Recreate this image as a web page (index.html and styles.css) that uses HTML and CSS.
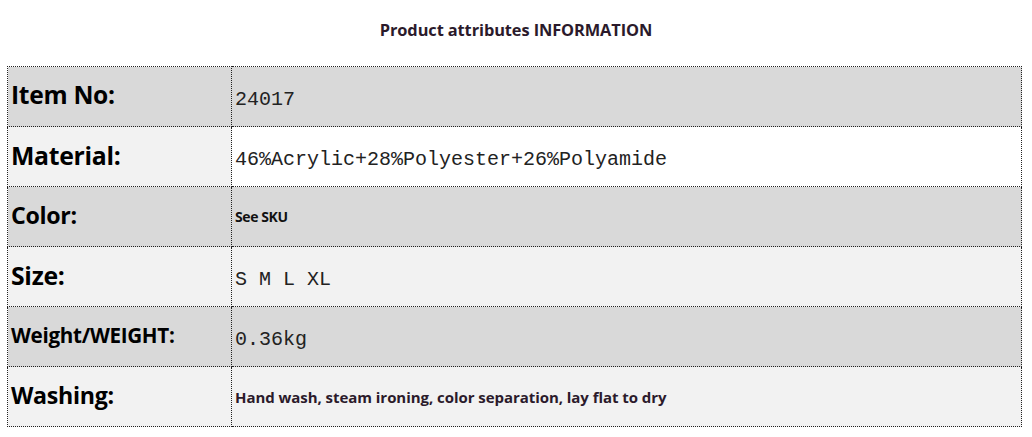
FILE: index.html
```html
<!DOCTYPE html>
<html>
<head>
<meta charset="utf-8">
<link rel="stylesheet" href="styles.css">
</head>
<body>
<div class="page">
  <h1 class="title">Product attributes INFORMATION</h1>
  <table class="attrs">
    <tr class="dark">
      <td class="label l-item">Item No:</td>
      <td class="value mono">24017</td>
    </tr>
    <tr class="light white-val">
      <td class="label l-material">Material:</td>
      <td class="value mono">46%Acrylic+28%Polyester+26%Polyamide</td>
    </tr>
    <tr class="dark">
      <td class="label l-color">Color:</td>
      <td class="value small">See SKU</td>
    </tr>
    <tr class="light">
      <td class="label l-size">Size:</td>
      <td class="value mono">S M L XL</td>
    </tr>
    <tr class="dark">
      <td class="label l-weight">Weight/WEIGHT:</td>
      <td class="value mono">0.36kg</td>
    </tr>
    <tr class="light">
      <td class="label l-washing">Washing:</td>
      <td class="value wash">Hand wash, steam ironing, color separation, lay flat to dry</td>
    </tr>
  </table>
</div>
</body>
</html>
```
FILE: styles.css
```css
html, body {
  margin: 0;
  padding: 0;
  background: #ffffff;
}
.page {
  width: 1032px;
  padding-top: 20px;
}
.title {
  margin: 0 0 26px 0;
  text-align: center;
  font-family: "Open Sans", sans-serif;
  font-weight: 700;
  font-size: 16.4px;
  line-height: 20px;
  color: #2b1a2b;
  letter-spacing: -0.1px;
}
.attrs {
  margin-left: 7px;
  width: 1015px;
  border-collapse: collapse;
}
.attrs td {
  border: 1px dotted #222;
  height: 59px;
  padding: 0;
  vertical-align: middle;
}
.label {
  width: 220px;
  padding-left: 3px !important;
  font-family: "Open Sans", sans-serif;
  font-weight: 700;
  color: #000;
  letter-spacing: -0.3px;
  line-height: 30px;
  height: 55px !important;
  padding-bottom: 4px !important;
}
.l-item { font-size: 24.6px; }
.l-material { font-size: 24.8px; }
.l-color { font-size: 23.2px; }
.l-size { font-size: 24.8px; }
.l-weight { font-size: 20.6px; }
.l-washing { font-size: 23.2px; }
.value {
  padding-left: 3px !important;
}
.mono {
  font-family: "Liberation Mono", monospace;
  font-size: 20px;
  line-height: 24px;
  color: #222;
  height: 53px !important;
  padding-top: 6px !important;
}
.small {
  font-family: "Open Sans", sans-serif;
  font-weight: 700;
  font-size: 14px;
  line-height: 20px;
  color: #111;
  letter-spacing: -0.4px;
}
.wash {
  font-family: "Open Sans", sans-serif;
  font-weight: 700;
  font-size: 15px;
  line-height: 20px;
  color: #2b1a2b;
  letter-spacing: -0.05px;
}
.dark td { background: #d9d9d9; }
.light td { background: #f2f2f2; }
.white-val td.value { background: #ffffff; }
```
